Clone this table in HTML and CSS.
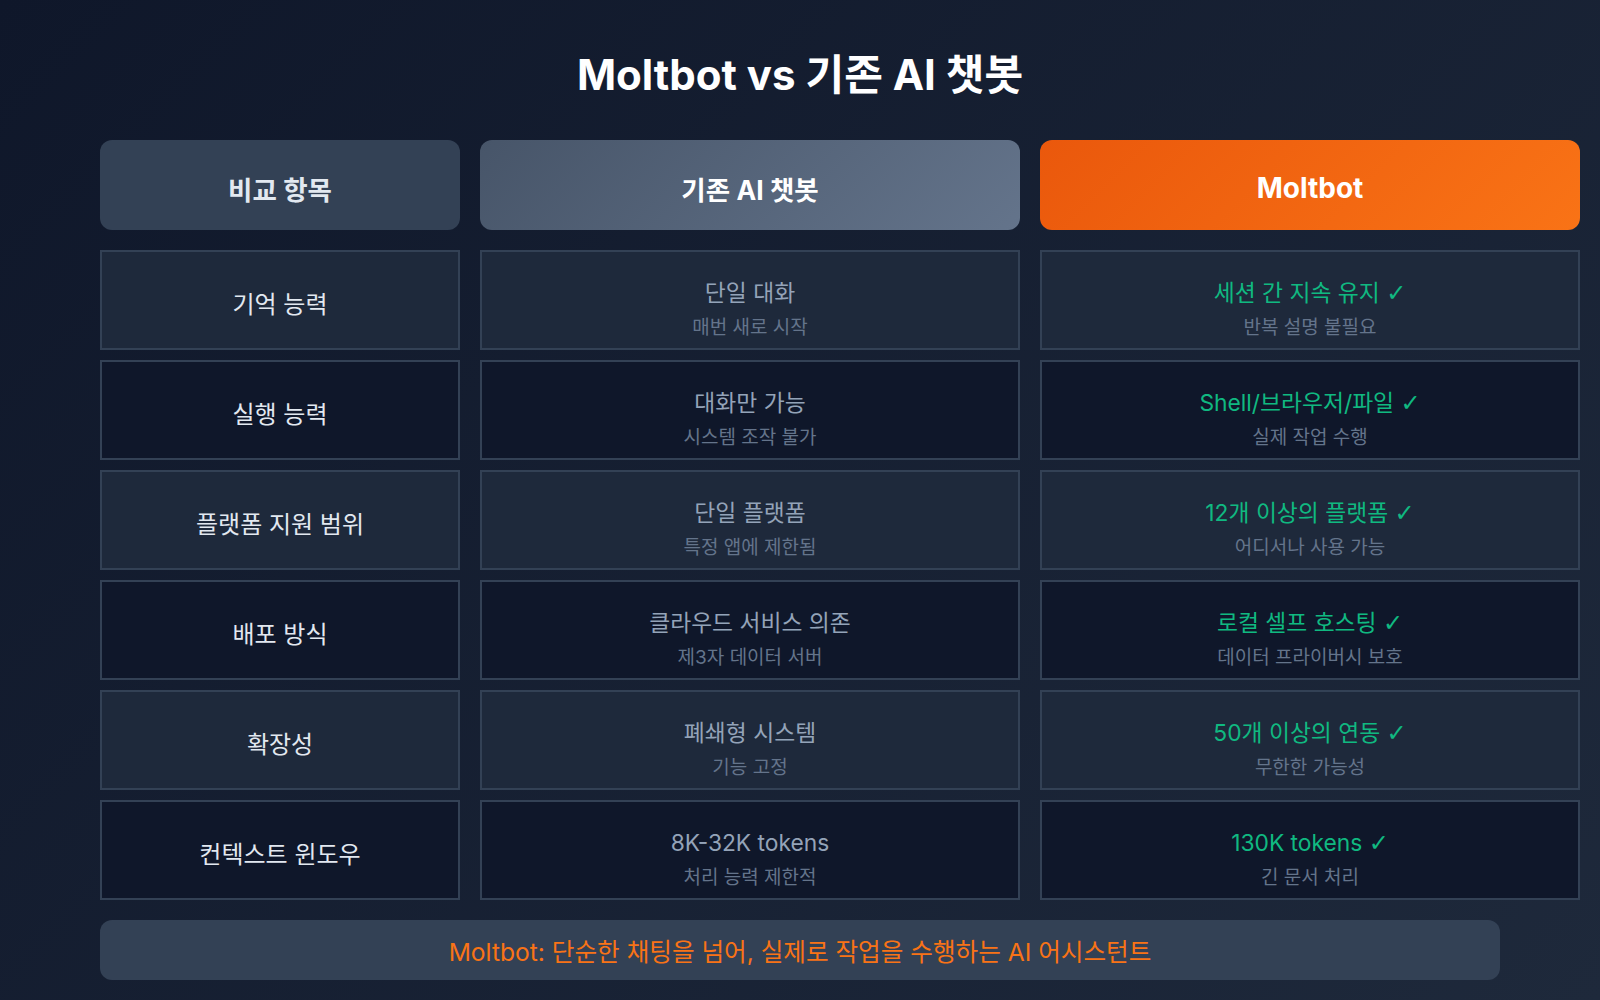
FILE: index.html
```html
<!DOCTYPE html>
<html lang="ko">
<head>
<meta charset="utf-8">
<title>Moltbot vs 기존 AI 챗봇</title>
<link rel="stylesheet" href="styles.css">
</head>
<body>
<div class="page">
  <h1 class="title">Moltbot vs 기존 AI 챗봇</h1>
  <div class="head-row">
    <div class="head head-label">비교 항목</div>
    <div class="head head-old">기존 AI 챗봇</div>
    <div class="head head-new">Moltbot</div>
  </div>
  <div class="grid">
    <div class="cell odd label">기억 능력</div>
    <div class="cell odd"><div class="main old">단일 대화</div><div class="sub">매번 새로 시작</div></div>
    <div class="cell odd"><div class="main new">세션 간 지속 유지 <span class="check">✓</span></div><div class="sub">반복 설명 불필요</div></div>

    <div class="cell even label">실행 능력</div>
    <div class="cell even"><div class="main old">대화만 가능</div><div class="sub">시스템 조작 불가</div></div>
    <div class="cell even"><div class="main new">Shell/브라우저/파일 <span class="check">✓</span></div><div class="sub">실제 작업 수행</div></div>

    <div class="cell odd label">플랫폼 지원 범위</div>
    <div class="cell odd"><div class="main old">단일 플랫폼</div><div class="sub">특정 앱에 제한됨</div></div>
    <div class="cell odd"><div class="main new">12개 이상의 플랫폼 <span class="check">✓</span></div><div class="sub">어디서나 사용 가능</div></div>

    <div class="cell even label">배포 방식</div>
    <div class="cell even"><div class="main old">클라우드 서비스 의존</div><div class="sub">제3자 데이터 서버</div></div>
    <div class="cell even"><div class="main new">로컬 셀프 호스팅 <span class="check">✓</span></div><div class="sub">데이터 프라이버시 보호</div></div>

    <div class="cell odd label">확장성</div>
    <div class="cell odd"><div class="main old">폐쇄형 시스템</div><div class="sub">기능 고정</div></div>
    <div class="cell odd"><div class="main new">50개 이상의 연동 <span class="check">✓</span></div><div class="sub">무한한 가능성</div></div>

    <div class="cell even label">컨텍스트 윈도우</div>
    <div class="cell even"><div class="main old">8K-32K tokens</div><div class="sub">처리 능력 제한적</div></div>
    <div class="cell even"><div class="main new">130K tokens <span class="check">✓</span></div><div class="sub">긴 문서 처리</div></div>
  </div>
  <div class="footer">Moltbot: 단순한 채팅을 넘어, 실제로 작업을 수행하는 AI 어시스턴트</div>
</div>
</body>
</html>
```
FILE: styles.css
```css
* { box-sizing: border-box; }
html, body {
  margin: 0;
  padding: 0;
}
body {
  width: 1600px;
  height: 1000px;
  overflow: hidden;
  background: linear-gradient(135deg, #0f172a 0%, #1e293b 100%);
  font-family: Inter, "Noto Sans CJK KR", sans-serif;
  color: #e2e8f0;
}
.page {
  width: 1400px;
  margin: 0 auto;
  padding-top: 47px;
}
.title {
  margin: 0;
  height: 56px;
  text-align: center;
  font-size: 42px;
  font-weight: 700;
  line-height: 56px;
  color: #ffffff;
}
.head-row,
.grid {
  display: grid;
  grid-template-columns: 360px 540px 540px;
  column-gap: 20px;
  width: 1480px;
}
.head-row {
  margin-top: 37px;
  margin-bottom: 20px;
}
.grid {
  grid-template-rows: repeat(6, 100px);
  row-gap: 10px;
}
.head {
  height: 90px;
  padding-top: 6px;
  display: flex;
  align-items: center;
  justify-content: center;
  border-radius: 12px;
  font-size: 26.5px;
  font-weight: 700;
  color: #ffffff;
}
.head-label { background: #334155; color: #e2e8f0; }
.head-old { background: linear-gradient(135deg, #475569 0%, #64748b 100%); }
.head-new {
  background: linear-gradient(135deg, #ea580c 0%, #f97316 100%);
  font-size: 28px;
}
.cell {
  border: 2px solid #334155;
  padding-top: 18px;
  display: flex;
  flex-direction: column;
  align-items: center;
  justify-content: center;
  text-align: center;
}
.odd { background: #1e293b; }
.even { background: #0f172a; }
.cell.label {
  padding-top: 4px;
  font-size: 24px;
  font-weight: 400;
  color: #e2e8f0;
}
.main {
  font-size: 22.8px;
  line-height: 32px;
}
.main.old { color: #94a3b8; }
.main.new { color: #10b981; }
.check {
  font-family: "DejaVu Sans", sans-serif;
  font-size: 24px;
}
.sub {
  margin-top: 6px;
  font-size: 19px;
  line-height: 26px;
  color: #64748b;
}
.footer {
  margin-top: 20px;
  height: 60px;
  background: #334155;
  border-radius: 12px;
  display: flex;
  align-items: center;
  justify-content: center;
  font-size: 24.6px;
  color: #f97316;
}
```
